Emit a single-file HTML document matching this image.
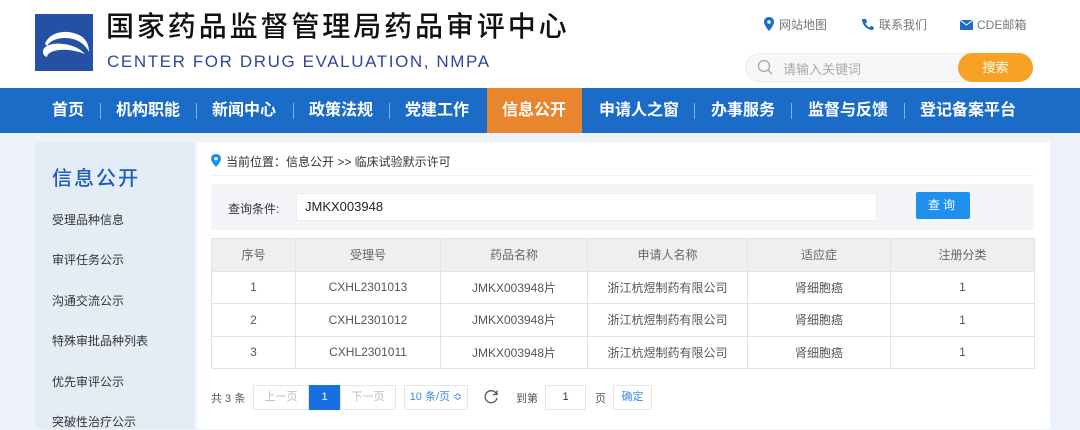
<!DOCTYPE html>
<html><head><meta charset="utf-8"><style>
*{margin:0;padding:0;box-sizing:border-box}
body{width:1080px;height:429px;overflow:hidden;background:#eef3f9;font-family:"Liberation Sans","Noto Sans CJK SC",sans-serif;position:relative;color:#333}
.a{position:absolute}
.hdr{left:0;top:0;width:1080px;height:88px;background:#fff}
.nav{left:0;top:88px;width:1080px;height:45px;background:#1b6cc6}
.nav span{position:absolute;top:0;line-height:45px;color:#fff;font-size:16px;font-weight:bold;white-space:nowrap}
.nav i{position:absolute;top:15px;width:1px;height:16px;background:#7fb0e6}
.side{left:35px;top:142px;width:159px;height:287px;background:#e4ecf6}
.side div{position:absolute;left:17px;font-size:12px;color:#333}
.main{left:197px;top:142px;width:853px;height:287px;background:#fff}
table{position:absolute;left:211px;top:238px;border-collapse:collapse;font-size:12px;color:#555}
td{border:1px solid #e3e3e3;text-align:center;height:32.5px;padding:0}
tr.h td{background:#efefef;color:#666}
.pg{position:absolute;top:385px;height:25px;border:1px solid #e5e5e5;font-size:11px;line-height:23px;text-align:center;color:#bbb;background:#fff}
</style></head><body>
<div class="a hdr"></div>
<svg class="a" style="left:35px;top:14px" width="58" height="57" viewBox="0 0 58 57"><rect width="58" height="57" fill="#2550a6"/>
<path d="M10 30 C14 18 32 14 46 22 C52 26 54 32 54 38 C50 30 42 24 30 24 C20 24 14 28 12 32 Z" fill="#fff"/>
<path d="M8 38 C8 30 22 28 34 31 C42 33 46 36 50 40 C42 37 34 35 24 36 C16 37 12 40 12 43 C9 42 8 40 8 38 Z" fill="#fff"/>
<path d="M16 39 C22 36 32 36 40 38 C32 39 24 40 18 42 Z" fill="#2550a6"/></svg>
<div class="a" style="left:106px;top:10px;font-size:28px;letter-spacing:2.9px;color:#111;font-weight:500;white-space:nowrap;line-height:34px">国家药品监督管理局药品审评中心</div>
<div class="a" style="left:107px;top:52px;font-size:17px;letter-spacing:1.6px;color:#2d4899;white-space:nowrap;line-height:20px">CENTER FOR DRUG EVALUATION, NMPA</div>
<svg class="a" style="left:764px;top:17px" width="10" height="14" viewBox="0 0 10 14"><path d="M5 0C2 0 0 2.2 0 5c0 3.5 5 9 5 9s5-5.5 5-9C10 2.2 8 0 5 0z" fill="#1b6cc6"/><circle cx="5" cy="5" r="1.8" fill="#fff"/></svg>
<div class="a" style="left:779px;top:16px;font-size:12px;color:#777">网站地图</div>
<svg class="a" style="left:861px;top:18px" width="13" height="13" viewBox="0 0 13 13"><path d="M2 1 L5 1 L6 4 L4.5 5.5 C5.5 7.5 6.5 8.5 8.5 9.5 L10 8 L13 9 L12 12 C6 12 1 7 1 1 Z" fill="#1b6cc6"/></svg>
<div class="a" style="left:879px;top:16px;font-size:12px;color:#777">联系我们</div>
<svg class="a" style="left:960px;top:20px" width="13" height="10" viewBox="0 0 13 10"><rect width="13" height="10" fill="#1b6cc6"/><path d="M0 0 L6.5 5 L13 0" stroke="#fff" fill="none"/></svg>
<div class="a" style="left:977px;top:16px;font-size:12px;color:#777">CDE邮箱</div>
<div class="a" style="left:745px;top:53px;width:288px;height:29px;border-radius:15px;background:#f6f7f9;border:1px solid #ececec"></div>
<svg class="a" style="left:757px;top:59px" width="17" height="17" viewBox="0 0 17 17"><circle cx="7" cy="7" r="5.5" stroke="#aaa" stroke-width="1.4" fill="none"/><path d="M11 11 L15 15" stroke="#aaa" stroke-width="1.4"/></svg>
<div class="a" style="left:783px;top:59px;font-size:13px;color:#aaa">请输入关键词</div>
<div class="a" style="left:958px;top:53px;width:75px;height:29px;border-radius:15px;background:#f7a225;color:#fff;font-size:13px;line-height:29px;text-align:center">搜索</div>
<div class="a nav">
<div class="a" style="left:487px;top:0;width:95px;height:45px;background:#e8862e"></div>
<span style="left:52px">首页</span><i style="left:100px"></i>
<span style="left:116px">机构职能</span><i style="left:196px"></i>
<span style="left:212px">新闻中心</span><i style="left:293px"></i>
<span style="left:309px">政策法规</span><i style="left:389px"></i>
<span style="left:405px">党建工作</span>
<span style="left:502px">信息公开</span>
<span style="left:599px">申请人之窗</span><i style="left:694px"></i>
<span style="left:711px">办事服务</span><i style="left:791px"></i>
<span style="left:808px">监督与反馈</span><i style="left:904px"></i>
<span style="left:920px">登记备案平台</span>
</div>
<div class="a side">
<div style="top:20px;font-size:20px;color:#1b5fb8;font-weight:500;letter-spacing:2px">信息公开</div>
<div style="top:69px">受理品种信息</div>
<div style="top:109px">审评任务公示</div>
<div style="top:150px">沟通交流公示</div>
<div style="top:190px">特殊审批品种列表</div>
<div style="top:231px">优先审评公示</div>
<div style="top:271px">突破性治疗公示</div>
</div>
<div class="a main"></div>
<svg class="a" style="left:211px;top:154px" width="10" height="13" viewBox="0 0 10 13"><path d="M5 0C2 0 0 2 0 4.8c0 3.2 5 8.2 5 8.2s5-5 5-8.2C10 2 8 0 5 0z" fill="#1b8ef0"/><circle cx="5" cy="4.8" r="1.7" fill="#fff"/></svg>
<div class="a" style="left:226px;top:153px;font-size:12px;color:#333">当前位置：信息公开 &gt;&gt; 临床试验默示许可</div>
<div class="a" style="left:211px;top:175px;width:823px;height:1px;background:#eef0f3"></div>
<div class="a" style="left:211px;top:184px;width:823px;height:46px;background:#f3f5f8"></div>
<div class="a" style="left:228px;top:200px;font-size:12px;color:#333">查询条件:</div>
<div class="a" style="left:296px;top:193px;width:581px;height:28px;background:#fff;border:1px solid #eceef1;font-size:13px;line-height:26px;padding-left:8px;color:#222">JMKX003948</div>
<div class="a" style="left:916px;top:192px;width:54px;height:27px;background:#1f90ee;border-radius:2px;color:#fff;font-size:12px;line-height:27px;text-align:center;letter-spacing:3px">查询</div>
<table>
<tr class="h"><td style="width:84px">序号</td><td style="width:145px">受理号</td><td style="width:147px">药品名称</td><td style="width:160px">申请人名称</td><td style="width:143px">适应症</td><td style="width:144px">注册分类</td></tr>
<tr><td>1</td><td>CXHL2301013</td><td>JMKX003948片</td><td>浙江杭煜制药有限公司</td><td>肾细胞癌</td><td>1</td></tr>
<tr><td>2</td><td>CXHL2301012</td><td>JMKX003948片</td><td>浙江杭煜制药有限公司</td><td>肾细胞癌</td><td>1</td></tr>
<tr><td>3</td><td>CXHL2301011</td><td>JMKX003948片</td><td>浙江杭煜制药有限公司</td><td>肾细胞癌</td><td>1</td></tr>
</table>
<div class="a" style="left:211px;top:390px;font-size:11px;color:#555">共 3 条</div>
<div class="pg" style="left:253px;width:56px">上一页</div>
<div class="pg" style="left:309px;width:31px;background:#1a6fe0;color:#fff;border-color:#1a6fe0">1</div>
<div class="pg" style="left:340px;width:56px">下一页</div>
<div class="pg" style="left:404px;width:64px;color:#3b8be0">10 条/页 ≎</div>
<svg class="a" style="left:484px;top:389px" width="15" height="15" viewBox="0 0 15 15"><path d="M12.5 5 A6 6 0 1 0 13 9" stroke="#555" stroke-width="1.3" fill="none"/><path d="M13 1.5 L13 5.5 L9 5.5" stroke="#555" stroke-width="1.3" fill="none"/></svg>
<div class="a" style="left:516px;top:390px;font-size:11px;color:#555">到第</div>
<div class="pg" style="left:545px;width:41px;color:#333">1</div>
<div class="a" style="left:595px;top:390px;font-size:11px;color:#555">页</div>
<div class="pg" style="left:613px;width:39px;color:#3b8be0">确定</div>
</body></html>
